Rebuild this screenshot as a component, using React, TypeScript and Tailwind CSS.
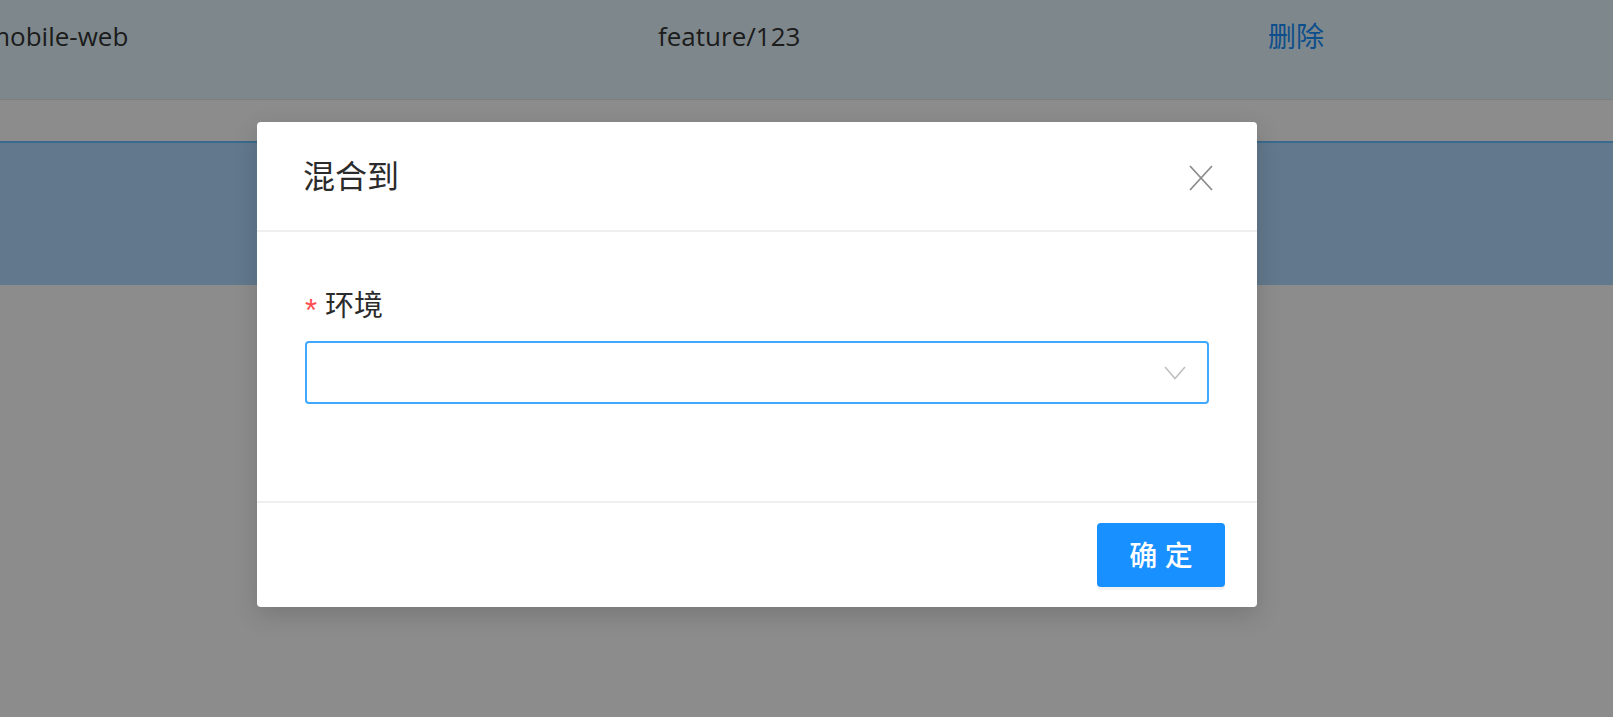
const font = { fontFamily: '"Open Sans", "Noto Sans CJK SC", sans-serif' }

export default function App() {
  return (
    <div className="relative h-[717px] w-full overflow-hidden bg-white" style={font}>
      {/* 背景頁面：表格列 */}
      <div className="flex h-[100px] items-start border-b border-[#e8e8e8] bg-[#e6f7ff] pt-[16px] text-[26px] leading-[40px] text-[#333]">
        <span className="-ml-[14px] w-[672px] shrink-0">mobile-web</span>
        <span className="w-[610px] shrink-0">feature/123</span>
        <span className="text-[28px] text-[#1890ff]">删除</span>
      </div>
      <div className="h-[41px]" />
      <div className="h-[144px] border-t-2 border-[#69c0ff] bg-[#b3dbff]" />

      {/* 遮罩 */}
      <div className="absolute inset-0 bg-black/45" />

      {/* 對話框 */}
      <div className="absolute left-[257px] top-[122px] w-[1000px] rounded-[4px] bg-white shadow-[0_8px_24px_rgba(0,0,0,0.15)]">
        <div className="flex h-[108px] items-center justify-between pl-[46px] pr-[44px]">
          <h2 className="text-[32px] leading-[44px] text-[#2b2b2b]">混合到</h2>
          <button type="button" className="mt-[4px] flex h-[26px] w-[24px] items-center justify-center text-[#8c8c8c]">
            <svg viewBox="0 0 24 26" className="h-[26px] w-[24px]" fill="none" stroke="currentColor" strokeWidth={1.8}>
              <path d="M1 1 L23 25 M23 1 L1 25" />
            </svg>
          </button>
        </div>
        <div className="h-[2px] bg-[#efefef]" />

        <div className="px-[48px] pb-[97px] pt-[52px]">
          <label className="flex items-center text-[29px] leading-[42px] text-[#2b2b2b]">
            <span
              className="mr-[8px] mt-[12px] text-[31px] leading-[28px] text-[#ff4d4f]"
              style={{ fontFamily: '"Liberation Sans", sans-serif' }}
            >
              *
            </span>
            环境
          </label>
          <div className="mt-[15px] flex h-[63px] items-center justify-end rounded-[4px] border-2 border-[#40a9ff] pr-[21px]">
            <svg viewBox="0 0 22 14" className="h-[14px] w-[22px]" fill="none" stroke="#bfbfbf" strokeWidth={1.6}>
              <path d="M1 1 L11 12.5 L21 1" />
            </svg>
          </div>
        </div>

        <div className="h-[2px] bg-[#efefef]" />
        <div className="flex justify-end py-[20px] pr-[32px]">
          <button
            type="button"
            className="h-[64px] w-[128px] rounded-[4px] bg-[#1890ff] text-[28px] font-medium text-white shadow-[0_3px_0_rgba(0,0,0,0.05)]"
          >
            确 定
          </button>
        </div>
      </div>
    </div>
  )
}
